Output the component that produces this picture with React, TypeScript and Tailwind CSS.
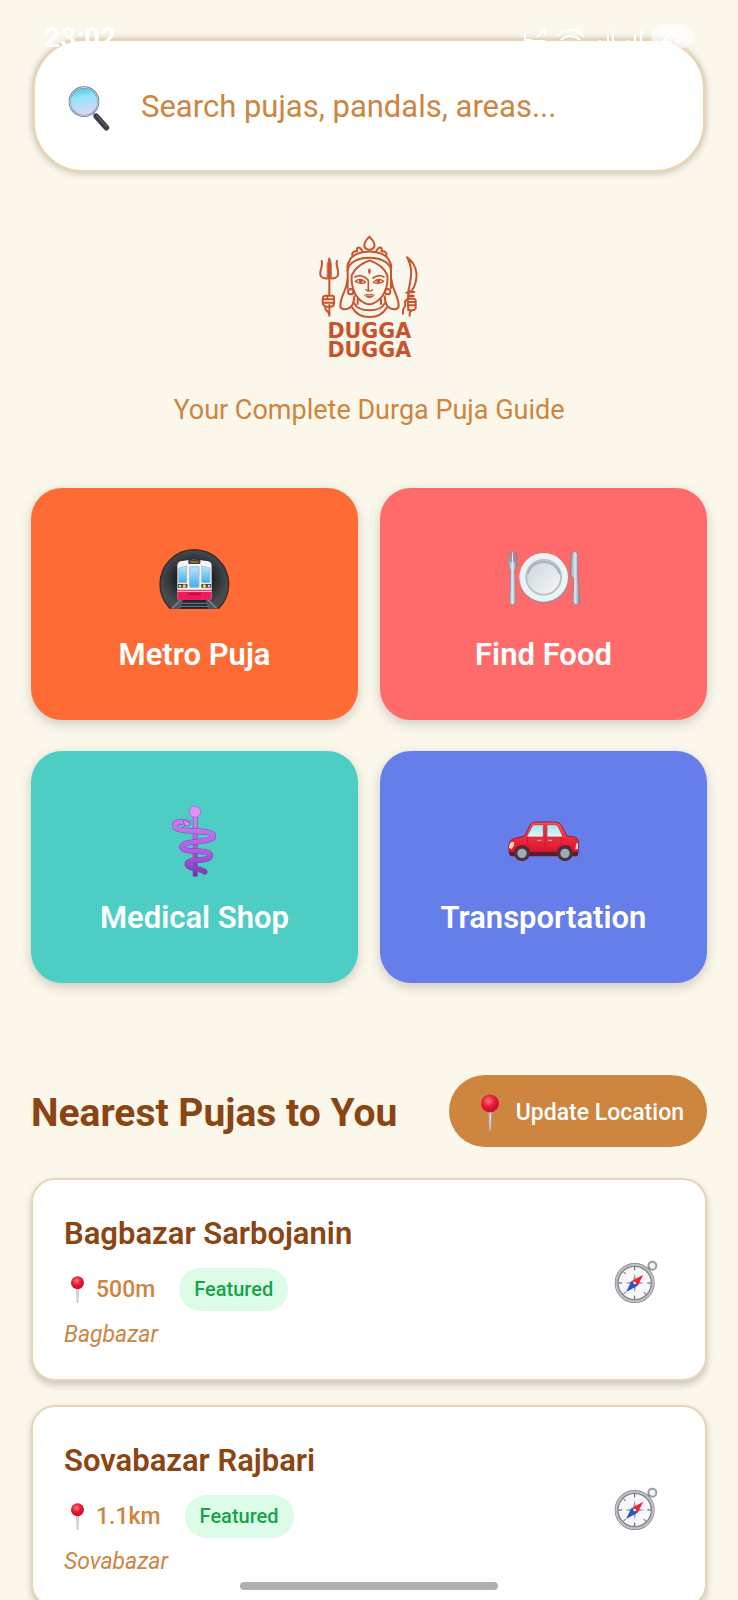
import React, { useState } from "react";

type Art = { className?: string };

const SearchArt = ({ className }: Art) => (
  <svg viewBox="192 248 144 144" className={className} aria-hidden="true">
    <defs>
      <linearGradient id="lens" x1="0" y1="0" x2="0.2" y2="1">
        <stop offset="0" stopColor="#4fb4d4" />
        <stop offset="0.4" stopColor="#8fe4fa" />
        <stop offset="1" stopColor="#d9d8f8" />
      </linearGradient>
    </defs>
    <path d="M276 338l12 12" stroke="#a9afb8" strokeWidth="8" />
    <path d="M286 348l30 34" stroke="#3d3b47" strokeWidth="17" strokeLinecap="round" />
    <path d="M287 345l30 34" stroke="#6d6c78" strokeWidth="3" strokeLinecap="round" />
    <circle cx="249" cy="304" r="43" fill="url(#lens)" stroke="#5d7a88" strokeWidth="6" />
    <circle cx="249" cy="304" r="43" fill="none" stroke="#c9d8df" strokeWidth="3" />
  </svg>
);

const MetroArt = ({ className }: Art) => (
  <svg viewBox="56 39 216 216" className={className} aria-hidden="true">
    <defs>
      <radialGradient id="tunnel">
        <stop offset="0.4" stopColor="#101417" />
        <stop offset="0.75" stopColor="#33393d" />
        <stop offset="1" stopColor="#464c50" />
      </radialGradient>
      <linearGradient id="glass" x1="0" y1="0" x2="0" y2="1">
        <stop offset="0" stopColor="#b9e8fb" />
        <stop offset="1" stopColor="#3fb0ef" />
      </linearGradient>
    </defs>
    <path d="M88 234A103 103 0 1 1 236 234z" fill="url(#tunnel)" stroke="#3b2a24" strokeWidth="4" />
    <path d="M122 208h82l32 28H88z" fill="#4d5661" />
    <path d="M129 206h66l8 30h-82z" fill="#20262d" />
    <path d="M124 220h76M118 229h88" stroke="#66717e" strokeWidth="4" />
    <path d="M122 208L96 235M202 208l26 27" stroke="#7b8694" strokeWidth="4" />
    <path d="M111 104q1-8 9-10 41-9 84 0 9 2 10 10v98q0 8-9 8h-85q-9 0-9-8z" fill="#f4f5f7" />
    <path d="M111 179h103v23q0 8-9 8h-85q-9 0-9-8z" fill="#ee1c5c" />
    <path d="M111 184h103" stroke="#ffb5cb" strokeWidth="4" />
    <path d="M144 188h38v8h-38z" fill="#c80f4a" />
    <rect x="144" y="90" width="36" height="12" rx="2" fill="#4a4038" />
    <path d="M150 96h24" stroke="#c99a4b" strokeWidth="3" />
    <path d="M115 114l24-6v50h-24zM184 108l25 6v44h-25z" fill="url(#glass)" stroke="#9eafbd" strokeWidth="2" />
    <rect x="148" y="110" width="28" height="62" rx="2" fill="url(#glass)" stroke="#a8b8c4" strokeWidth="3" />
    <path d="M113 162h28v11h-28zM183 162h29v11h-29z" fill="#46413e" />
    <circle cx="132" cy="168" r="5" fill="#ffd34d" />
    <circle cx="192" cy="168" r="5" fill="#ffd34d" />
    <circle cx="119" cy="168" r="4" fill="#d6d7d2" />
    <circle cx="206" cy="168" r="4" fill="#d6d7d2" />
  </svg>
);

const FoodArt = ({ className }: Art) => (
  <svg viewBox="54 39 216 216" className={className} aria-hidden="true">
    <defs>
      <linearGradient id="steel" x1="0" y1="0" x2="1" y2="0">
        <stop offset="0" stopColor="#8794a2" />
        <stop offset="0.5" stopColor="#dfe8ee" />
        <stop offset="1" stopColor="#718090" />
      </linearGradient>
      <linearGradient id="plate" x1="0" y1="0" x2="1" y2="1">
        <stop offset="0" stopColor="#ccd5da" />
        <stop offset="1" stopColor="#f5f7f8" />
      </linearGradient>
    </defs>
    <circle cx="162" cy="145" r="74" fill="#8295a0" />
    <circle cx="161" cy="142" r="73" fill="#edf2f5" />
    <circle cx="161" cy="142" r="52" fill="url(#plate)" stroke="#b4c3cb" strokeWidth="6" />
    <path d="M113 132a50 50 0 0 1 96 0" fill="none" stroke="#9bacb6" strokeWidth="4" />
    <path d="M55 68q2-5 4 0l2 28h3l1-28q3-5 5 0l1 28h3l2-28q4-5 5 0v34q0 12-7 18l4 94q0 10-10 10t-9-10l3-94q-8-6-8-18z" fill="url(#steel)" stroke="#71808e" strokeWidth="1.5" />
    <path d="M246 67q15-6 17 6l1 70 6 70q1 11-10 11t-11-11l2-70q-12-4-10-23z" fill="url(#steel)" stroke="#71808e" strokeWidth="2" />
  </svg>
);

const MedicalArt = ({ className }: Art) => (
  <svg viewBox="27 48 216 216" className={className} aria-hidden="true">
    <defs>
      <linearGradient id="violet" x1="0" y1="0" x2="0" y2="1">
        <stop offset="0" stopColor="#d98bf5" />
        <stop offset="0.5" stopColor="#ac59e2" />
        <stop offset="1" stopColor="#7131ad" />
      </linearGradient>
      <linearGradient id="snake" gradientUnits="userSpaceOnUse" x1="0" y1="90" x2="0" y2="250">
        <stop offset="0" stopColor="#cb79f0" />
        <stop offset="0.6" stopColor="#b05ee2" />
        <stop offset="1" stopColor="#7d3bb8" />
      </linearGradient>
    </defs>
    <path d="M130 78h12v181h-13z" fill="url(#violet)" stroke="#8144b0" strokeWidth="2" />
    <circle cx="135" cy="65" r="17" fill="#df91f6" stroke="#a75bd0" strokeWidth="2" />
    <g fill="none" strokeLinecap="round" strokeLinejoin="round">
      <path d="M106 99C92 93 75 94 74 107C74 131 187 116 190 137C192 160 97 149 96 170C95 193 180 174 181 196C183 218 112 203 112 222C113 237 150 234 164 245" stroke="#7d44b4" strokeWidth="17" />
      <path d="M106 99C92 93 75 94 74 107C74 131 187 116 190 137C192 160 97 149 96 170C95 193 180 174 181 196C183 218 112 203 112 222C113 237 150 234 162 244" stroke="url(#snake)" strokeWidth="14" />
    </g>
    <path d="M100 92q17-7 24 3l-10 2 9 5q-5 7-19 5z" fill="#d98bf5" stroke="#8144b0" strokeWidth="2" />
    <circle cx="111" cy="94" r="2" fill="#55247e" />
  </svg>
);

const CarArt = ({ className }: Art) => (
  <svg viewBox="54 18 216 216" className={className} aria-hidden="true">
    <defs>
      <linearGradient id="paint" x1="0" y1="0" x2="0" y2="1">
        <stop offset="0" stopColor="#ff4e5d" />
        <stop offset="0.5" stopColor="#ef293d" />
        <stop offset="1" stopColor="#c9152f" />
      </linearGradient>
      <linearGradient id="window" x1="0" y1="0" x2="0" y2="1">
        <stop offset="0" stopColor="#a6e1ed" />
        <stop offset="1" stopColor="#def7fa" />
      </linearGradient>
    </defs>
    <path d="M57 150q-4-28 14-34l33-8 16-33q5-8 16-9h58q14 0 20 9l17 33 23 3q11 3 11 14v27q0 13-8 14H66q-9 0-9-16z" fill="url(#paint)" stroke="#a41731" strokeWidth="3" />
    <path d="M57 156h207v5q0 8-8 8H65q-8-2-8-13z" fill="#5b1c2e" />
    <path d="M127 78q3-4 9-4h24v37h-46q-4 0-2-5zM171 74h22q8 0 12 7l12 25q2 5-3 5h-43z" fill="url(#window)" stroke="#b6263a" strokeWidth="2" />
    <path d="M165 70v84M112 112q-1 38 14 42h67q20-2 22-42" fill="none" stroke="#b51a32" strokeWidth="2" />
    <path d="M142 121h12M174 121h12" stroke="#ffb0ae" strokeWidth="3" />
    <path d="M57 144q0-14 8-18h8q0 14-8 22z" fill="#ffe0a0" />
    <path d="M259 130h5v18h-8z" fill="#ffd6d6" />
    <circle cx="96" cy="159" r="24" fill="#7b1830" />
    <circle cx="225" cy="159" r="24" fill="#7b1830" />
    <circle cx="96" cy="161" r="21" fill="#3a3944" />
    <circle cx="225" cy="161" r="21" fill="#3a3944" />
    <circle cx="96" cy="160" r="14" fill="#a4aab2" />
    <circle cx="225" cy="160" r="14" fill="#a4aab2" />
  </svg>
);

const PinArt = ({ className }: Art) => (
  <svg viewBox="149 101 60 116" className={className} aria-hidden="true">
    <defs>
      <radialGradient id="bead" cx="0.42" cy="0.35">
        <stop offset="0" stopColor="#ff7a83" />
        <stop offset="0.6" stopColor="#ee2037" />
        <stop offset="1" stopColor="#d3102f" />
      </radialGradient>
    </defs>
    <path d="M174 150h11l-3 58q-3 12-6 0z" fill="#a9abb8" />
    <path d="M178 150h4l-2 56h-2z" fill="#e9e9f1" />
    <circle cx="179" cy="129" r="27" fill="url(#bead)" />
  </svg>
);

const CompassArt = ({ className }: Art) => (
  <svg viewBox="98 57 138 138" className={className} aria-hidden="true">
    <circle cx="216" cy="77" r="12" fill="#f4f4f6" stroke="#9b9ca1" strokeWidth="6" />
    <path d="M199 89l10-6" stroke="#8a8b90" strokeWidth="8" />
    <circle cx="163" cy="129" r="54" fill="#f6f6fb" stroke="#85868a" strokeWidth="12" />
    <circle cx="163" cy="129" r="55" fill="none" stroke="#c0c1c5" strokeWidth="6" />
    <path d="M163 81v10M163 167v10M115 129h10M201 129h10M129 95l7 7M190 156l7 7M129 163l7-7" stroke="#50515a" strokeWidth="3" />
    <path d="M163 100l5 24 24 5-24 5-5 24-5-24-24-5 24-5z" fill="#9b9ca8" />
    <path d="M189 104l-17 33-17-15z" fill="#e32b38" />
    <path d="M137 156l17-34 18 15z" fill="#2457c5" />
    <circle cx="163" cy="129" r="4" fill="#f0f0f5" />
  </svg>
);

const Logo = ({ className }: Art) => (
  <svg viewBox="-3 0 420 450" className={className} role="img" aria-label="Dugga Dugga">
    <g fill="none" stroke="#c9532c" strokeWidth="6" strokeLinecap="round" strokeLinejoin="round">
      {/* crown */}
      <path d="M208 50C193 65 188 78 198 86Q208 93 218 86C229 78 223 65 208 50z" />
      <path d="M187 93C178 77 169 80 171 94M229 93C238 77 247 80 245 94" />
      <path d="M171 94C160 93 154 99 158 108M245 94C256 93 262 99 258 108" />
      <path d="M147 126C158 84 258 84 269 126" />
      <path d="M143 150C149 101 267 101 273 150" />
      <path d="M147 126C141 133 142 143 143 150M269 126C275 133 274 143 273 150" />
      {/* hair and face */}
      <path d="M209 121C188 129 164 143 155 166C153 198 163 236 196 250Q208 256 220 250C253 236 265 198 262 166C254 143 231 129 209 121z" />
      <path d="M143 150V204M273 150V204" />
      <path d="M143 178C139 215 122 226 121 257C121 268 134 270 146 265C158 260 162 250 163 229" />
      <path d="M274 178C278 215 295 226 296 257C296 268 283 270 271 265C259 260 255 250 254 229" />
      {/* brows, eyes, nose and lips */}
      <path d="M165 171Q181 161 198 174L205 181V211M252 171Q236 161 219 174" strokeWidth="5" />
      <path d="M166 184Q181 171 197 187Q181 194 166 184zM220 187Q235 171 251 184Q236 194 220 187z" strokeWidth="4" />
      <path d="M198 209Q208 218 218 209" strokeWidth="4" />
      <path d="M194 226Q202 221 208 225Q215 221 223 226Q208 240 194 226z" fill="#c9532c" strokeWidth="3" />
      <path d="M196 227H221" stroke="#fbf7ee" strokeWidth="1.5" />
      {/* earrings and necklace */}
      <circle cx="152" cy="215" r="8" />
      <circle cx="263" cy="215" r="8" />
      <path d="M163 250C176 278 240 278 254 250M157 263C178 300 239 300 260 263M173 238V252M243 238V252" />
      {/* trident */}
      <path d="M88 116V226M88 255V283" />
      <path d="M65 123C71 137 56 153 62 168Q70 178 88 174Q105 178 113 168C120 153 105 137 111 123" />
      <path d="M82 131L88 113L94 131V171H82z" fill="#c9532c" strokeWidth="2" />
      <path d="M76 227H97Q103 228 102 234V251Q101 259 94 260H79Q69 258 68 249V235Q69 228 76 227zM69 238H98M69 248H98M82 228V237M76 260V267L88 281V287" />
      {/* sword */}
      <path d="M321 112C354 135 358 178 335 214L325 213C333 176 341 147 321 112zM325 214V234M319 218L343 216" />
      <path d="M323 236H341Q348 237 347 244V265Q344 271 337 271H325zM325 246H346M325 256H346M323 236L315 244L316 258Q308 264 309 281M335 271L329 279V287" />
      <path d="M325 228h15" strokeWidth="8" />
    </g>
    <circle cx="182" cy="183" r="6" fill="#c9532c" />
    <circle cx="235" cy="183" r="6" fill="#c9532c" />
    <path d="M208 144q9 9 0 20q-8-11 0-20z" fill="#c9532c" />
    <g fill="#c9532c" fontFamily="DejaVu Sans, sans-serif" fontWeight="700" fontSize="62" textAnchor="middle">
      <text x="208" y="353">DUGGA</text>
      <text x="208" y="410">DUGGA</text>
    </g>
  </svg>
);

const StatusBar = () => (
  <div className="pointer-events-none fixed inset-x-0 top-0 z-10 flex items-start justify-between px-11 pt-6 text-white">
    <span className="text-[28px] leading-7 font-bold">23:02</span>
    <div className="flex items-start">
      <svg viewBox="0 0 120 24" className="h-6 w-[120px]" fill="none" stroke="currentColor" strokeWidth="2" aria-hidden="true">
        <path d="M2 9v14M2 16h7M7 17h14v7H7zM14 13l8-7M17 6h5v5" />
        <path d="M34 12q13-12 27 0M38 16q9-8 19 0M42 20q5-4 11 0" />
        <circle cx="55" cy="6" r="2" />
        <path d="M58 18h8v6h-8z" fill="currentColor" />
        <path d="M77 16v8M85 10v14M90 6v18M105 16v8M112 10v14M118 6v18" />
      </svg>
      <span className="ml-2 rounded-full bg-white/60 px-2.5 text-xl leading-6 font-bold">29</span>
    </div>
  </div>
);

const tiles = [
  { label: "Metro Puja", Icon: MetroArt, color: "bg-[#ff6b35]" },
  { label: "Find Food", Icon: FoodArt, color: "bg-[#ff6b6b]" },
  { label: "Medical Shop", Icon: MedicalArt, color: "bg-[#4ecdc4]" },
  { label: "Transportation", Icon: CarArt, color: "bg-[#667eea]" },
];

const pujas = [
  { name: "Bagbazar Sarbojanin", distance: "500m", area: "Bagbazar" },
  { name: "Sovabazar Rajbari", distance: "1.1km", area: "Sovabazar" },
];

export default function App() {
  const [query, setQuery] = useState("");

  return (
    <div className="h-screen overflow-hidden bg-[#fbf7eb] font-['Roboto',sans-serif]">
      <StatusBar />
      <main className="px-[31px] pt-[38px]">
        <label className="mx-px flex h-[135px] items-center gap-7 rounded-[51px] border-[3px] border-[#e8d5b7] bg-white px-[30px] pt-0.5 shadow-[0_1px_7px_rgba(0,0,0,0.2)]">
          <SearchArt className="size-12 shrink-0" />
          <input
            type="text"
            aria-label="Search"
            value={query}
            onChange={(e) => setQuery(e.target.value)}
            placeholder="Search pujas, pandals, areas..."
            className="min-w-0 flex-1 bg-transparent text-[31px] leading-10 text-[#8b4513] outline-none placeholder:text-[#cd853f]"
          />
        </label>

        <header className="mt-[47px] flex flex-col items-center">
          <Logo className="h-[150px] w-[140px] bg-[#fbf7ed]" />
          <p className="mt-[22px] text-[27px] leading-9 text-[#cd853f]">Your Complete Durga Puja Guide</p>
        </header>

        <nav className="mt-[60px] grid grid-cols-2 gap-x-[22px] gap-y-[31px]">
          {tiles.map(({ label, Icon, color }) => (
            <button
              key={label}
              type="button"
              className={`flex flex-col items-center gap-5 rounded-[31px] pt-[55px] pb-[45px] shadow-[0_4px_12px_rgba(0,0,0,0.18)] ${color}`}
            >
              <Icon className="size-[72px]" />
              <span className="text-[31px] leading-10 font-semibold text-white">{label}</span>
            </button>
          ))}
        </nav>

        <section className="mt-[92px]">
          <div className="flex items-center justify-between">
            <h2 className="pt-1 text-[39px] leading-[48px] font-bold text-[#8b4513]">Nearest Pujas to You</h2>
            <button
              type="button"
              className="flex h-[72px] items-center gap-4 rounded-full bg-[#cd853f] pt-1 pr-[23px] pl-[31px] text-[23px] leading-8 font-medium text-white"
            >
              <PinArt className="h-[39px] w-5" />
              Update Location
            </button>
          </div>

          <ul className="mt-[31px] flex flex-col gap-6">
            {pujas.map((puja) => (
              <li
                key={puja.name}
                className="flex items-center justify-between rounded-3xl border-2 border-[#e8d5b7] bg-white pt-[34px] pr-[46px] pb-[29px] pl-[31px] shadow-[0_4px_7px_rgba(0,0,0,0.2)]"
              >
                <div>
                  <h3 className="text-[31px] leading-10 font-semibold text-[#8b4513]">{puja.name}</h3>
                  <div className="mt-[14px] flex items-center gap-6">
                    <span className="flex items-center gap-[11px] pl-[6px] text-[23px] leading-8 font-medium text-[#cd853f]">
                      <PinArt className="h-7 w-[15px]" />
                      {puja.distance}
                    </span>
                    <span className="rounded-full bg-[#dcfce7] px-[15px] text-xl leading-[43px] font-medium text-[#16a34a]">
                      Featured
                    </span>
                  </div>
                  <p className="mt-[9px] text-[23px] leading-[30px] text-[#cd853f] italic">{puja.area}</p>
                </div>
                <button type="button" aria-label={`Directions to ${puja.name}`}>
                  <CompassArt className="size-[46px]" />
                </button>
              </li>
            ))}
          </ul>
        </section>
      </main>
      <div className="fixed bottom-[10px] left-1/2 h-2 w-[258px] -translate-x-1/2 rounded-full bg-[#b0b0b0]" />
    </div>
  );
}
